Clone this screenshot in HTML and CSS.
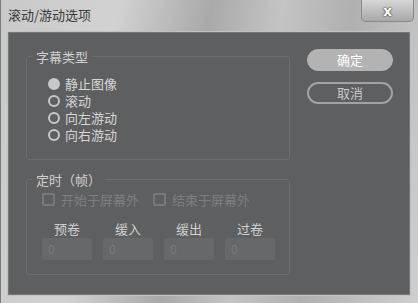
FILE: index.html
```html
<!DOCTYPE html>
<html lang="zh">
<head>
    <meta charset="UTF-8">
    <meta name="viewport" content="width=device-width, initial-scale=1.0">
    <title>滚动/游动选项</title>
    <link rel="stylesheet" href="styles.css">
</head>
<body>
    <div class="window">
        <div class="titlebar">
            <span class="title">滚动/游动选项</span>
            <button class="close">x</button>
        </div>
        <div class="client">
            <div class="left">
                <fieldset class="group group-type">
                    <legend>字幕类型</legend>
                    <label class="radio"><span class="dot checked"></span>静止图像</label>
                    <label class="radio"><span class="dot"></span>滚动</label>
                    <label class="radio"><span class="dot"></span>向左游动</label>
                    <label class="radio"><span class="dot"></span>向右游动</label>
                </fieldset>
                <fieldset class="group group-timing">
                    <legend>定时（帧）</legend>
                    <div class="checks">
                        <label class="check"><span class="box"></span>开始于屏幕外</label>
                        <label class="check"><span class="box"></span>结束于屏幕外</label>
                    </div>
                    <div class="fields">
                        <div class="field"><span class="field-label">预卷</span><span class="input">0</span></div>
                        <div class="field"><span class="field-label">缓入</span><span class="input">0</span></div>
                        <div class="field"><span class="field-label">缓出</span><span class="input">0</span></div>
                        <div class="field"><span class="field-label">过卷</span><span class="input">0</span></div>
                    </div>
                </fieldset>
            </div>
            <div class="right">
                <button class="btn btn-ok">确定</button>
                <button class="btn btn-cancel">取消</button>
            </div>
        </div>
    </div>
</body>
</html>
```
FILE: styles.css
```css
body {
    margin: 0;
    font-family: "Noto Sans CJK SC", "Noto Sans", sans-serif;
    font-size: 13px;
}
.window {
    width: 418px;
    height: 303px;
    box-sizing: border-box;
    background: linear-gradient(100deg, #c9c9c9 0%, #d2d2d2 25%, #a9a9a9 45%, #c4c4c4 60%, #b0b0b0 75%, #cfcfcf 100%);
    border-left: 1px solid #7a7a7a;
    display: flex;
    flex-direction: column;
}
.titlebar {
    height: 31px;
    display: flex;
    align-items: flex-start;
}
.title {
    margin: 6px 0 0 7px;
    color: #3a3a3a;
    line-height: 17px;
}
.close {
    margin-left: auto;
    margin-right: 4px;
    width: 53px;
    height: 22px;
    border: 1px solid #8a8a8a;
    border-top: none;
    border-radius: 0 0 5px 5px;
    background: linear-gradient(#d6d6d6, #a8a8a8);
    color: #fff;
    font-family: "DejaVu Sans", sans-serif;
    font-weight: bold;
    font-size: 14px;
    line-height: 18px;
    padding: 0;
    text-shadow: 0 0 2px #333, 0 0 1px #333;
}
.client {
    margin: 0 7px 7px 6px;
    flex: 1;
    background: #5e5f61;
    border: 1px solid #c2c2c2;
    box-shadow: inset 0 0 0 1px #777;
    display: flex;
    padding: 16px 0 0 18px;
}
.left {
    width: 264px;
}
.group {
    margin: 0;
    border: 1px solid #6d6e70;
    border-radius: 3px;
    min-width: 0;
    padding-left: 0;
}
.group legend {
    margin-left: 5px;
    padding: 0 4px;
    color: #cfcfcf;
    line-height: 17px;
}
.group-type {
    padding: 10px 0 16px 0;
}
.radio {
    display: flex;
    align-items: center;
    height: 17px;
    line-height: 17px;
    margin-left: 21px;
    color: #d6d6d6;
}
.dot {
    width: 8px;
    height: 8px;
    border: 2px solid #c8c8c8;
    border-radius: 50%;
    margin-right: 5px;
}
.dot.checked {
    background: #c8c8c8;
}
.group-timing {
    margin-top: 11px;
    padding: 3px 0 14px 0;
}
.checks {
    display: flex;
    height: 17px;
    align-items: center;
    margin-left: 15px;
}
.check {
    display: flex;
    align-items: center;
    line-height: 17px;
    color: #7f7f7f;
    margin-right: 14px;
}
.box {
    width: 9px;
    height: 9px;
    border: 2px solid #7a7a7a;
    border-radius: 2px;
    margin-right: 6px;
}
.fields {
    display: flex;
    gap: 11px;
    margin: 12px 0 0 15px;
}
.field {
    width: 50px;
    display: flex;
    flex-direction: column;
    align-items: center;
}
.field-label {
    color: #cfcfcf;
    line-height: 17px;
    margin-bottom: 1px;
}
.input {
    width: 50px;
    height: 22px;
    box-sizing: border-box;
    background: #67686a;
    border-radius: 2px;
    color: #7c7c7c;
    font-size: 12px;
    line-height: 22px;
    padding-left: 6px;
}
.right {
    margin-left: 17px;
    padding-top: 1px;
    display: flex;
    flex-direction: column;
    gap: 11px;
}
.btn {
    width: 86px;
    height: 22px;
    border-radius: 11px;
    font-family: inherit;
    font-size: 13px;
    padding: 0;
    line-height: 18px;
}
.btn-ok {
    background: #b3b3b3;
    border: 1px solid #b3b3b3;
    color: #fff;
}
.btn-cancel {
    background: transparent;
    border: 2px solid #a2a2a2;
    color: #c8c8c8;
}
```
